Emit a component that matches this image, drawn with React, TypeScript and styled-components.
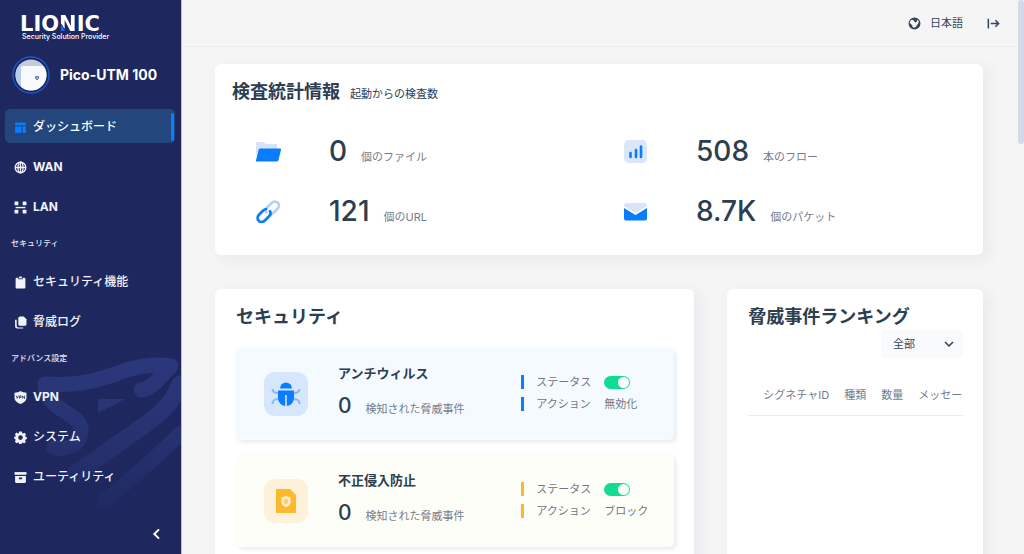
import React from "react";
import styled, { createGlobalStyle } from "styled-components";

const GlobalStyle = createGlobalStyle`
  * { box-sizing: border-box; }
  body {
    margin: 0;
    background: #f5f5f6;
    color: #2c3e50;
    font-family: Inter, "Noto Sans CJK JP", sans-serif;
    font-size: 11px;
    line-height: 16px;
  }
  a { color: inherit; text-decoration: none; }
  h1, h2, h3, p { margin: 0; }
`;

const Shell = styled.div`
  display: flex;
  height: 100vh;
  overflow: hidden;
`;

/* ---------- sidebar ---------- */

const Sidebar = styled.aside`
  position: relative;
  display: flex;
  flex-direction: column;
  flex: 0 0 182px;
  background: #1e285f;
  border-right: 1px solid #b4bdd6;
  color: #fff;
`;

const Ribbon = styled.svg`
  position: absolute;
  left: 0;
  top: 350px;
  width: 181px;
  height: 180px;
`;

const Brand = styled.div`
  padding: 14px 0 0 20px;
`;

const BrandName = styled.div`
  font: 700 21px/20px "DejaVu Sans", sans-serif;
`;

const BrandN = styled.span`
  background: linear-gradient(to top right, #1e63d8 32%, #fff 32%);
  background-clip: text;
  color: transparent;
`;

const Tagline = styled.p`
  margin-left: 2px;
  font-size: 7px;
  font-weight: 500;
  line-height: 6px;
`;

const Device = styled.div`
  display: flex;
  align-items: center;
  gap: 10px;
  padding: 16px 0 12px 12px;
  font-size: 14px;
  font-weight: 700;
  white-space: nowrap;
  svg { flex: none; }
`;

const Nav = styled.nav`
  position: relative;
  display: flex;
  flex-direction: column;
`;

const NavItem = styled.a<{ $active?: boolean }>`
  display: flex;
  align-items: center;
  gap: 6px;
  height: 34px;
  margin: 3px 6px 3px 5px;
  padding: 2px 1px 0 9px;
  border-radius: 5px;
  font-size: 12px;
  font-weight: 500;
  color: ${(p) => (p.$active ? "#fff" : "#f1f3fa")};
  background: ${(p) => (p.$active ? "#23467d" : "transparent")};
  &::after {
    content: "";
    width: 3px;
    height: 28px;
    margin-left: auto;
    border-radius: 2px;
    background: ${(p) => (p.$active ? "#0a7cff" : "transparent")};
  }
`;

const Latin = styled.span`
  font-weight: 700;
`;

const NavLabel = styled.p`
  height: 35px;
  padding-left: 11px;
  font-size: 8px;
  font-weight: 500;
  line-height: 35px;
  color: #e3e6f2;
`;

const Collapse = styled.button`
  display: flex;
  align-self: flex-end;
  margin: auto 16px 12px 0;
  padding: 0;
  border: 0;
  background: none;
  color: #fff;
`;

/* ---------- main ---------- */

const Main = styled.main`
  position: relative;
  flex: 1;
  min-width: 0;
  overflow: hidden;
`;

const ScrollThumb = styled.div`
  position: absolute;
  top: 0;
  right: 0;
  width: 6px;
  height: 26%;
  border-radius: 3px;
  background: #d5dae8;
`;

const TopBar = styled.header`
  display: flex;
  align-items: center;
  justify-content: flex-end;
  gap: 24px;
  height: 47px;
  margin-right: 8px;
  padding-right: 16px;
  border-bottom: 1px solid #e9eaec;
`;

const TopButton = styled.button`
  display: flex;
  align-items: center;
  gap: 9px;
  padding: 0;
  border: 0;
  background: none;
  color: #34465a;
  font: inherit;
`;

const Content = styled.div`
  display: flex;
  flex-direction: column;
  gap: 34px;
  padding: 17px 41px 34px 33px;
`;

const Card = styled.section`
  min-width: 0;
  border-radius: 6px;
  background: #fff;
  box-shadow: 6px 4px 14px rgba(70, 90, 120, 0.07);
`;

const StatsCard = styled(Card)`
  padding: 15px 17px 14px;
`;

const CardTitle = styled.h2`
  font-size: 18px;
  font-weight: 700;
  line-height: 26px;
  white-space: nowrap;
`;

const StatsHead = styled.div`
  display: flex;
  align-items: baseline;
  gap: 10px;
`;

const StatsGrid = styled.div`
  display: grid;
  grid-template-columns: 1fr 1fr;
  grid-auto-rows: 60px;
  margin-top: 16px;
`;

const Stat = styled.div`
  display: flex;
  align-items: center;
  gap: 48px;
  padding-left: 24px;
`;

const Figure = styled.p<{ $size: number }>`
  display: flex;
  align-items: baseline;
  gap: 14px;
  color: #747c8c;
  white-space: nowrap;
  strong {
    color: #2c3e50;
    font-size: ${(p) => p.$size}px;
    font-weight: 500;
    line-height: 30px;
  }
`;

const Columns = styled.div`
  display: grid;
  grid-template-columns: minmax(0, 15fr) minmax(0, 8fr);
  gap: 33px;
`;

const SecurityCard = styled(Card)`
  display: flex;
  flex-direction: column;
  gap: 15px;
  padding: 15px 20px 21px 21px;
`;

const SecurityTitle = styled(CardTitle)`
  margin-bottom: 3px;
`;

const Feature = styled.article<{ $bg: string }>`
  display: flex;
  align-items: center;
  height: 92px;
  padding: 0 20px 0 28px;
  border-radius: 5px;
  background: ${(p) => p.$bg};
  box-shadow: 2px 2px 4px rgba(50, 90, 120, 0.13);
`;

const FeatureIcon = styled.div<{ $bg: string }>`
  display: grid;
  place-items: center;
  width: 44px;
  height: 44px;
  border-radius: 11px;
  background: ${(p) => p.$bg};
`;

const FeatureText = styled.div`
  display: flex;
  flex: 1;
  flex-direction: column;
  gap: 9px;
  padding: 0 0 4px 30px;
`;

const FeatureName = styled.h3`
  font-size: 13px;
  font-weight: 700;
  line-height: 18px;
`;

const Settings = styled.div`
  display: grid;
  gap: 6px;
  width: 133px;
  padding-bottom: 2px;
`;

const Setting = styled.label<{ $bar: string }>`
  display: grid;
  grid-template-columns: 3px 56px 1fr;
  align-items: center;
  column-gap: 12px;
  color: #6f7787;
  white-space: nowrap;
  &::before {
    content: "";
    height: 14px;
    background: ${(p) => p.$bar};
  }
`;

const Toggle = styled.input`
  appearance: none;
  display: flex;
  width: 26px;
  height: 13px;
  margin: 0;
  padding: 1px;
  border-radius: 7px;
  background: #b9c0cc;
  &::before {
    content: "";
    width: 11px;
    height: 11px;
    border-radius: 50%;
    background: #fff;
  }
  &:checked {
    justify-content: flex-end;
    background: #12dc92;
  }
`;

const RankingCard = styled(Card)`
  display: flex;
  flex-direction: column;
  padding: 15px 20px 21px 21px;
`;

const Picker = styled.div`
  display: grid;
  align-self: flex-end;
  align-items: center;
  width: 82px;
  height: 28px;
  border-radius: 4px;
  background: #f9fafb;
  svg {
    grid-area: 1 / 1;
    justify-self: end;
    margin-right: 8px;
    pointer-events: none;
  }
`;

const Select = styled.select`
  appearance: none;
  grid-area: 1 / 1;
  width: 100%;
  height: 100%;
  padding: 0 12px;
  border: 0;
  background: none;
  color: #34465a;
  font: inherit;
`;

const TableFrame = styled.div`
  overflow: hidden;
  margin-top: 16px;
`;

const Table = styled.table`
  border-collapse: collapse;
  th {
    height: 41px;
    padding: 2px 0 0 15px;
    border-bottom: 1px solid #e8eaee;
    color: #747c8b;
    font-weight: 400;
    text-align: left;
    white-space: nowrap;
  }
`;

/* ---------- icons ---------- */

const Glyph = ({ size = 13, children }: { size?: number; children: React.ReactNode }) => (
  <svg width={size} height={size} viewBox="0 0 24 24" fill="currentColor" aria-hidden="true">
    {children}
  </svg>
);

const DashboardIcon = () => (
  <Glyph>
    <g fill="#0a7cff">
      <path d="M2 3h20v5H2z" />
      <path d="M2 10h12v12H2z" />
      <path d="M16 10h6v12h-6z" />
    </g>
  </Glyph>
);

const WanIcon = () => (
  <Glyph>
    <g fill="none" stroke="currentColor" strokeWidth="2.4">
      <circle cx="12" cy="12" r="9.8" />
      <ellipse cx="12" cy="12" rx="4.6" ry="9.8" />
      <path d="M2 12h20M12 2v20" />
    </g>
  </Glyph>
);

const LanIcon = () => (
  <Glyph>
    <rect x="1" y="1" width="7" height="7" rx="1" />
    <rect x="16" y="1" width="7" height="7" rx="1" />
    <rect x="1" y="16" width="7" height="7" rx="1" />
    <rect x="16" y="16" width="7" height="7" rx="1" />
    <path d="M3 10.800h18v2.600H3z" />
  </Glyph>
);

const ClipboardIcon = () => (
  <Glyph>
    <path d="M5 3h3v3h8V3h3a2 2 0 0 1 2 2v16a2 2 0 0 1-2 2H5a2 2 0 0 1-2-2V5a2 2 0 0 1 2-2z" />
    <rect x="9.500" y="1" width="5" height="3.500" />
  </Glyph>
);

const LogIcon = () => (
  <Glyph>
    <path d="M11 1h7l5 5v9a3 3 0 0 1-3 3h-9a3 3 0 0 1-3-3V4a3 3 0 0 1 3-3z" />
    <path d="M2 7h3v11a3 3 0 0 0 3 3h9v2H6a4 4 0 0 1-4-4z" />
  </Glyph>
);

const VpnIcon = () => (
  <Glyph>
    <path d="M12 0c3 2 7 3 11 3v9c0 6-5 10-11 12C6 22 1 18 1 12V3c4 0 8-1 11-3z" />
    <g fill="none" stroke="#1e285f" strokeWidth="1.400">
      <path d="M4 8.500l2 5 2-5M10 14V9h3v3h-3M15.500 14V9l4 5V8.500" />
    </g>
  </Glyph>
);

const GearIcon = () => (
  <Glyph>
    <path
      fillRule="evenodd"
      d="M9.500 1h5l.6 3 1.500.7 2.600-1.700 3 3.400-1.700 2.500.6 1.600 2.500.5v4l-2.600.6-.7 1.600 1.700 2.600-3.300 3.200-2.600-1.700-1.500.6-.6 2.600h-4.500l-.6-2.600-1.600-.6L4.700 22.500 1.500 19.300l1.700-2.600-.7-1.600-2-.6v-4l2.200-.5.6-1.600L1.600 6l3.200-3.200 2.500 1.600L8.900 4zM12 7.800a4.300 4.300 0 1 0 0 8.600 4.300 4.300 0 0 0 0-8.600z"
    />
  </Glyph>
);

const ArchiveIcon = () => (
  <Glyph>
    <path d="M1 2h22v5H1z" />
    <path fillRule="evenodd" d="M2 9h20v11a2 2 0 0 1-2 2H4a2 2 0 0 1-2-2zM9 12v3h6v-3z" />
  </Glyph>
);

const Chevron = ({ down }: { down?: boolean }) => (
  <Glyph size={down ? 12 : 16}>
    <path
      d={down ? "M4 8l8 8 8-8" : "M15 5l-7 7 7 7"}
      fill="none"
      stroke="currentColor"
      strokeWidth="3"
    />
  </Glyph>
);

const GlobeIcon = () => (
  <Glyph>
    <path
      fillRule="evenodd"
      d="M12 1a11 11 0 1 0 0 22 11 11 0 0 0 0-22zM5 6l3-1 3 2 2 3 3-1 1-4 3 3-1 4-3 3-1 3-4 2-3-2v-3l-3-2-2-3z"
    />
  </Glyph>
);

const LogoutIcon = () => (
  <Glyph>
    <path d="M2.500 3v18M7 12h14M15.500 6l6 6-6 6" fill="none" stroke="currentColor" strokeWidth="2.800" />
  </Glyph>
);

const FolderIcon = () => (
  <svg width="25" height="25" viewBox="0 0 25 25" aria-hidden="true">
    <path d="M0 17V4a1 1 0 0 1 1-1h6l3 2h10a1 1 0 0 1 1 1v4H3z" fill="#d6e3fb" />
    <path d="M4 9.500h20a1 1 0 0 1 1 1.200L22.500 21a2 2 0 0 1-2 1.500H1a1 1 0 0 1-1-1.200L2.500 11A2 2 0 0 1 4 9.500z" fill="#0a7cff" />
  </svg>
);

const LinkIcon = () => (
  <svg width="25" height="25" viewBox="0 0 25 25" fill="none" strokeWidth="2.700" strokeLinecap="round" aria-hidden="true">
    <path d="M14.500 15.500c1-.2 2-.7 2.800-1.500l4-4c2-2 2.200-4.600.5-6.300s-4.400-1.500-6.400.5l-4 4c-1.600 1.600-1.800 3.600-.9 5.200" stroke="#b7d0f5" />
    <path d="M10 10c-1 .2-2 .7-2.800 1.500l-4 4c-2 2-2.200 4.600-.5 6.300s4.400 1.500 6.400-.5l4-4c1.600-1.600 1.800-3.600.9-5.200" stroke="#0a7cff" />
  </svg>
);

const ChartIcon = () => (
  <svg width="25" height="25" viewBox="0 0 25 25" aria-hidden="true">
    <rect x="1" y="1" width="23" height="23" rx="5" fill="#d9e6fc" />
    <path d="M7.500 14v4M13 11v7M18 7.500v10.500" stroke="#0a7cff" strokeWidth="2.600" strokeLinecap="round" />
  </svg>
);

const MailIcon = () => (
  <svg width="25" height="25" viewBox="0 0 25 25" aria-hidden="true">
    <path d="M3 4h19a2 2 0 0 1 2 2v3l-11.500 6L1 9V6a2 2 0 0 1 2-2z" fill="#d9e4fb" />
    <path d="M1 8.500l11.500 7L24 8.500v11a2 2 0 0 1-2 2H3a2 2 0 0 1-2-2z" fill="#0a7cff" />
    <path d="M1 8l11.500 7L24 8" fill="none" stroke="#fff" strokeWidth="1.500" />
  </svg>
);

const BugIcon = () => (
  <svg width="30" height="26" viewBox="0 0 30 26" fill="none" aria-hidden="true">
    <path d="M1.500 8c0 3 2 4 6 4M28.500 8c0 3-2 4-6 4M1.500 23c0-4 2-5 6-5M28.500 23c0-4-2-5-6-5" stroke="#86b8f8" strokeWidth="2" />
    <path d="M9 7.500a6 6 0 0 1 12 0z" fill="#0a7cff" />
    <path d="M7 9.500h16V17a8 8 0 0 1-8 8 8 8 0 0 1-8-8z" fill="#0a7cff" />
    <path d="M15 14v11" stroke="#d6e7fd" strokeWidth="1.600" />
  </svg>
);

const PatchIcon = () => (
  <svg width="22" height="24" viewBox="0 0 22 24" aria-hidden="true">
    <path d="M1 0h14l6 6v17a1 1 0 0 1-1 1H2a1 1 0 0 1-1-1z" fill="#fdb92e" />
    <path d="M11 7l4.500 1.500v4c0 3-1.500 4.500-4.500 5.800-3-1.300-4.500-2.800-4.500-5.800v-4z" fill="#fef0cf" />
    <path d="M11 10l2 .8v2.200c0 1.300-.8 2-2 2.600-1.200-.6-2-1.300-2-2.600v-2.200z" fill="#fdcb60" />
  </svg>
);

const DeviceAvatar = () => (
  <svg width="38" height="38" viewBox="0 0 38 38" aria-hidden="true">
    <defs>
      <clipPath id="avatarClip">
        <circle cx="19" cy="19" r="15.500" />
      </clipPath>
    </defs>
    <circle cx="19" cy="19" r="18" fill="#1b2355" stroke="#1d56c4" strokeWidth="1.500" />
    <g clipPath="url(#avatarClip)">
      <path d="M0 0h38v38H0z" fill="#c3cbdc" />
      <path d="M0 8h10v30H0z" fill="#b9cbea" />
      <rect x="9" y="10" width="28" height="28" rx="2" fill="#f8f9fc" />
      <path d="M23.500 20.500h3v2l-1.500 1.500-1.500-1.500z" fill="#8db2ea" stroke="#4c6498" strokeWidth=".8" />
    </g>
  </svg>
);

/* ---------- data ---------- */

const mainLinks = [
  { label: "ダッシュボード", icon: <DashboardIcon />, active: true },
  { label: "WAN", icon: <WanIcon />, latin: true },
  { label: "LAN", icon: <LanIcon />, latin: true },
];
const securityLinks = [
  { label: "セキュリティ機能", icon: <ClipboardIcon /> },
  { label: "脅威ログ", icon: <LogIcon /> },
];
const advancedLinks = [
  { label: "VPN", icon: <VpnIcon />, latin: true },
  { label: "システム", icon: <GearIcon /> },
  { label: "ユーティリティ", icon: <ArchiveIcon /> },
];

type LinkData = { label: string; icon: React.ReactNode; active?: boolean; latin?: boolean };

const NavLinks = ({ links }: { links: LinkData[] }) => (
  <>
    {links.map((l) => (
      <NavItem key={l.label} href="#" $active={l.active}>
        {l.icon}
        {l.latin ? <Latin>{l.label}</Latin> : <span>{l.label}</span>}
      </NavItem>
    ))}
  </>
);

const stats = [
  { icon: <FolderIcon />, value: "0", unit: "個のファイル" },
  { icon: <ChartIcon />, value: "508", unit: "本のフロー" },
  { icon: <LinkIcon />, value: "121", unit: "個のURL" },
  { icon: <MailIcon />, value: "8.7K", unit: "個のパケット" },
];

const features = [
  { name: "アンチウィルス", icon: <BugIcon />, bg: "#f5faff", iconBg: "#d6e6fd", bar: "#0a7cff", action: "無効化" },
  { name: "不正侵入防止", icon: <PatchIcon />, bg: "#fefef8", iconBg: "#fef1da", bar: "#fdb92e", action: "ブロック" },
];

export default function App() {
  return (
    <Shell>
      <GlobalStyle />
      <Sidebar>
        <Ribbon viewBox="0 0 181 180" aria-hidden="true">
          <defs>
            <linearGradient id="ribbonFade" x1="0" y1="0" x2="0" y2="180" gradientUnits="userSpaceOnUse">
              <stop offset="0" stopColor="#2c387d" />
              <stop offset="0.400" stopColor="#283373" />
              <stop offset="0.900" stopColor="#1f2961" />
            </linearGradient>
          </defs>
          <g fill="none" stroke="url(#ribbonFade)" strokeWidth="15" strokeLinecap="round" strokeLinejoin="round">
            <path d="M54 98c16 2 27-4 27-18C81 62 46 62 45 34c29 2 50-2 76-12 20-7 36-8 50-6-12 12-18 22-30 24" />
            <path d="M180 34c-9 24-28 36-48 50l-57 40" strokeWidth="17" />
            <path d="M180 84c-24 24-46 42-76 68" strokeWidth="15" />
          </g>
          <path d="M98 49h27l-27 14z" fill="#2a3576" />
        </Ribbon>
        <Brand>
          <BrandName>
            LIO<BrandN>N</BrandN>IC
          </BrandName>
          <Tagline>Security Solution Provider</Tagline>
        </Brand>
        <Device>
          <DeviceAvatar />
          Pico-UTM 100
        </Device>
        <Nav>
          <NavLinks links={mainLinks} />
          <NavLabel>セキュリティ</NavLabel>
          <NavLinks links={securityLinks} />
          <NavLabel>アドバンス設定</NavLabel>
          <NavLinks links={advancedLinks} />
        </Nav>
        <Collapse aria-label="メニューを閉じる">
          <Chevron />
        </Collapse>
      </Sidebar>

      <Main>
        <TopBar>
          <TopButton>
            <GlobeIcon />
            日本語
          </TopButton>
          <TopButton aria-label="ログアウト">
            <LogoutIcon />
          </TopButton>
        </TopBar>

        <Content>
          <StatsCard>
            <StatsHead>
              <CardTitle>検査統計情報</CardTitle>
              <span>起動からの検査数</span>
            </StatsHead>
            <StatsGrid>
              {stats.map((s) => (
                <Stat key={s.unit}>
                  {s.icon}
                  <Figure $size={28}>
                    <strong>{s.value}</strong>
                    <span>{s.unit}</span>
                  </Figure>
                </Stat>
              ))}
            </StatsGrid>
          </StatsCard>

          <Columns>
            <SecurityCard>
              <SecurityTitle>セキュリティ</SecurityTitle>
              {features.map((f) => (
                <Feature key={f.name} $bg={f.bg}>
                  <FeatureIcon $bg={f.iconBg}>{f.icon}</FeatureIcon>
                  <FeatureText>
                    <FeatureName>{f.name}</FeatureName>
                    <Figure $size={21}>
                      <strong>0</strong>
                      <span>検知された脅威事件</span>
                    </Figure>
                  </FeatureText>
                  <Settings>
                    <Setting $bar={f.bar}>
                      <span>ステータス</span>
                      <Toggle type="checkbox" defaultChecked />
                    </Setting>
                    <Setting as="div" $bar={f.bar}>
                      <span>アクション</span>
                      <span>{f.action}</span>
                    </Setting>
                  </Settings>
                </Feature>
              ))}
            </SecurityCard>

            <RankingCard>
              <CardTitle>脅威事件ランキング</CardTitle>
              <Picker>
                <Select aria-label="種類" defaultValue="all">
                  <option value="all">全部</option>
                </Select>
                <Chevron down />
              </Picker>
              <TableFrame>
                <Table>
                  <thead>
                    <tr>
                      <th>シグネチャID</th>
                      <th>種類</th>
                      <th>数量</th>
                      <th>メッセージ</th>
                    </tr>
                  </thead>
                </Table>
              </TableFrame>
            </RankingCard>
          </Columns>
        </Content>
        <ScrollThumb />
      </Main>
    </Shell>
  );
}
